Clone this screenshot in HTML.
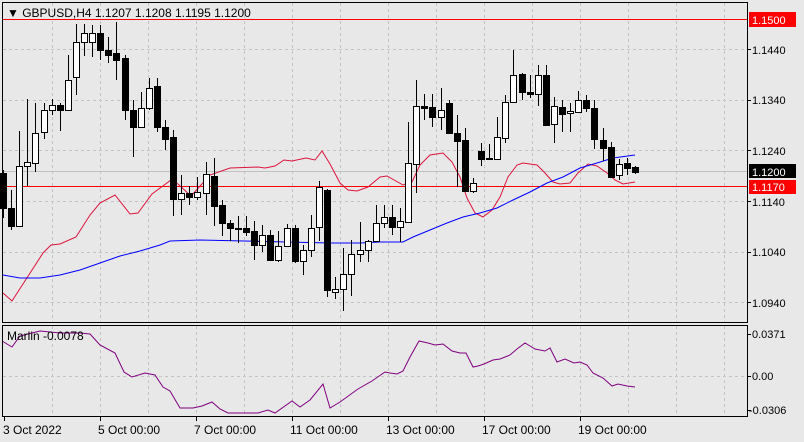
<!DOCTYPE html>
<html><head><meta charset="utf-8"><style>
html,body{margin:0;padding:0;background:#e8e8e8;}
body{width:804px;height:442px;overflow:hidden;position:relative;font-family:"Liberation Sans",Tahoma,sans-serif;}
svg{position:absolute;left:0;top:0;}
</style></head><body>
<svg id="s" width="804" height="442" xmlns="http://www.w3.org/2000/svg" font-family="Liberation Sans, sans-serif" font-size="11">
<rect x="0" y="0" width="804" height="442" fill="#e8e8e8"/>
<g id="grid" stroke="#c4c4c4" stroke-dasharray="3,3" stroke-width="1"></g>
<line x1="3" y1="171.5" x2="747" y2="171.5" stroke="#c0c0c0"/>
<line x1="3" y1="19.5" x2="747" y2="19.5" stroke="#ff0000"/>
<line x1="3" y1="186.5" x2="747" y2="186.5" stroke="#ff0000"/>
<polyline fill="none" stroke="#dc143c" stroke-width="1" points="3,293 12,301 43,253 51,245 60,244 76,237 90,215 100,203 115,195 130,214 138,213 152,194 171,180 178,184 191,196 210,175 230,168 258,167 265,168 275,166 284,160 292,161 306,158 315,160 322,151 330,164 340,183 348,190 357,191 368,187 380,177 387,176 403,185 412,182 420,165 430,155 443,153 452,162 460,177 467,198 475,213 483,217 492,210 500,197 508,177 517,165 523,163 537,165 545,173 553,182 560,184 570,183 578,173 588,164 597,166 607,173 615,180 623,184 635,182"/>
<polyline fill="none" stroke="#0000ff" stroke-width="1" points="3,275 20,278 40,278 60,275 80,270 100,263 120,256 140,251 160,245 170,241 200,240 330,243 360,243 380,242 403,242 413,237 430,230 447,223 463,217 480,213 497,208 513,200 530,192 547,183 563,177 580,168 597,163 613,158 635,155"/>
<g id="candles"></g>
<polyline fill="none" stroke="#800080" stroke-width="1" points="2,341 12,347 20,336 40,331 60,333 80,333 90,334 100,345 115,353 124,372 132,377 145,373 155,375 163,387 170,391 180,408 193,408 202,406 212,402 220,409 228,413 240,413 258,413 268,410 275,413 292,401 300,407 310,400 323,384 330,408 340,402 358,389 372,381 385,372 390,373 397,374 403,371 410,357 419,341 428,343 435,345 443,344 452,351 460,353 466,353 473,367 478,366 484,364 493,360 500,359 510,355 517,349 525,343 530,346 535,349 545,351 550,348 557,362 565,359 574,363 580,362 587,365 593,373 603,378 612,386 618,384 627,386 635,387"/>
<!-- frames -->
<rect x="2.5" y="2.5" width="745" height="320" fill="none" stroke="#000"/>
<rect x="2.5" y="325.5" width="745" height="91" fill="none" stroke="#000"/>
<g id="ticks" stroke="#000"></g>
<text x="7" y="17" font-size="12" fill="#000">▼ GBPUSD,H4  1.1207 1.1208 1.1195 1.1200</text>
<text x="7" y="340" font-size="12" fill="#000">Marlin -0.0078</text>
<g font-size="11" fill="#000">
<text x="752" y="54">1.1440</text>
<text x="752" y="104">1.1340</text>
<text x="752" y="155">1.1240</text>
<text x="752" y="206">1.1140</text>
<text x="752" y="256">1.1040</text>
<text x="752" y="307">1.0940</text>
<text x="752" y="338">0.0371</text>
<text x="752" y="380">0.00</text>
<text x="749" y="414">-0.0306</text>
</g>
<rect x="749" y="12" width="47" height="15" fill="#ff0000"/>
<text x="752" y="24" fill="#fff">1.1500</text>
<rect x="749" y="164" width="47" height="14" fill="#000"/>
<text x="752" y="176" fill="#fff">1.1200</text>
<rect x="749" y="180" width="47" height="14" fill="#ff0000"/>
<text x="752" y="191" fill="#fff">1.1170</text>
<g font-size="12" fill="#000">
<text x="3" y="434">3 Oct 2022</text>
<text x="98" y="434">5 Oct 00:00</text>
<text x="194" y="434">7 Oct 00:00</text>
<text x="290" y="434">11 Oct 00:00</text>
<text x="386" y="434">13 Oct 00:00</text>
<text x="482" y="434">17 Oct 00:00</text>
<text x="578" y="434">19 Oct 00:00</text>
</g>
</svg>
<script>
var NS="http://www.w3.org/2000/svg";
function el(p,n,a){var e=document.createElementNS(NS,n);for(var k in a)e.setAttribute(k,a[k]);p.appendChild(e);return e;}
var g=document.getElementById("grid");
var vx=[52,100,148,196,244,292,340,388,436,484,532,580,628,676,724];
vx.forEach(function(x){el(g,"line",{x1:x+.5,y1:3,x2:x+.5,y2:322});el(g,"line",{x1:x+.5,y1:326,x2:x+.5,y2:416});});
[49,100,150,201,252,302].forEach(function(y){el(g,"line",{x1:3,y1:y+.5,x2:747,y2:y+.5});});
el(g,"line",{x1:3,y1:376.5,x2:747,y2:376.5});
var t=document.getElementById("ticks");
[49,100,150,201,252,302,334,376,410].forEach(function(y){el(t,"line",{x1:747,y1:y+.5,x2:751,y2:y+.5});});
[4,100,196,292,388,484,580].forEach(function(x){el(t,"line",{x1:x+.5,y1:417,x2:x+.5,y2:421});});
// [top,bottom,high,low,bull]
var C=[
[173,208,170,218,0],[208,226,190,230,0],[166,226,131,227,1],[162,166,99,186,1],[133,163,103,172,1],[110,132,103,139,1],[105,110,99,115,1],[105,110,103,131,0],
[80,110,55,111,1],[42,77,24,95,1],[33,42,24,56,1],[33,42,25,57,1],[33,50,25,60,0],[50,55,37,63,0],[53,60,22,80,0],[58,110,55,120,0],
[110,127,100,157,0],[108,127,92,127,1],[88,108,78,110,1],[86,127,78,132,0],[127,139,120,150,0],[137,199,130,216,0],[193,199,175,215,1],[193,197,186,205,0],
[192,197,177,200,1],[174,193,162,215,1],[176,206,158,226,0],[205,223,200,236,0],[223,228,220,241,0],[228,229,216,243,0],[228,232,216,236,0],[231,245,221,260,0],
[235,245,225,252,1],[235,260,230,261,0],[246,260,231,262,1],[228,246,224,247,1],[228,261,225,263,0],[250,261,245,275,1],[228,250,215,257,1],[187,227,181,241,1],
[190,290,189,297,0],[289,292,277,299,1],[274,289,248,311,1],[254,274,240,296,1],[250,254,222,262,1],[241,250,240,262,1],[223,241,205,242,1],[217,223,205,228,1],
[217,227,205,235,0],[221,227,208,242,1],[163,222,122,223,1],[106,164,80,193,1],[106,108,94,120,0],[107,117,94,127,0],[110,117,88,130,1],[103,133,100,134,0],
[133,141,115,187,0],[140,191,128,192,0],[183,191,178,193,1],[151,159,143,166,0],[158,159,144,160,0],[137,159,117,160,1],[102,138,95,143,1],[75,102,50,103,1],
[74,92,73,100,0],[92,94,75,98,0],[75,94,65,106,1],[75,125,65,126,0],[106,124,97,143,1],[107,114,100,132,0],[111,113,103,132,1],[100,112,91,112,1],
[100,108,95,112,0],[108,139,100,149,0],[140,148,128,161,0],[147,177,142,177,0],[164,175,159,180,1],[163,168,158,175,0],[167,172,166,174,0]];
var cg=document.getElementById("candles");
var n=C.length;
C.forEach(function(c,i){
 var x=3+i*8+(i>=48?0:0);
 x=Math.round(3+i*(632/(n-1)));
 el(cg,"line",{x1:x+.5,y1:c[2],x2:x+.5,y2:c[3],stroke:"#000"});
 var h=Math.max(1,c[1]-c[0]);
 el(cg,"rect",{x:x-2.5,y:c[0]+.5,width:6,height:h,fill:c[4]?"#fff":"#000",stroke:"#000"});
});
</script>
</body></html>
